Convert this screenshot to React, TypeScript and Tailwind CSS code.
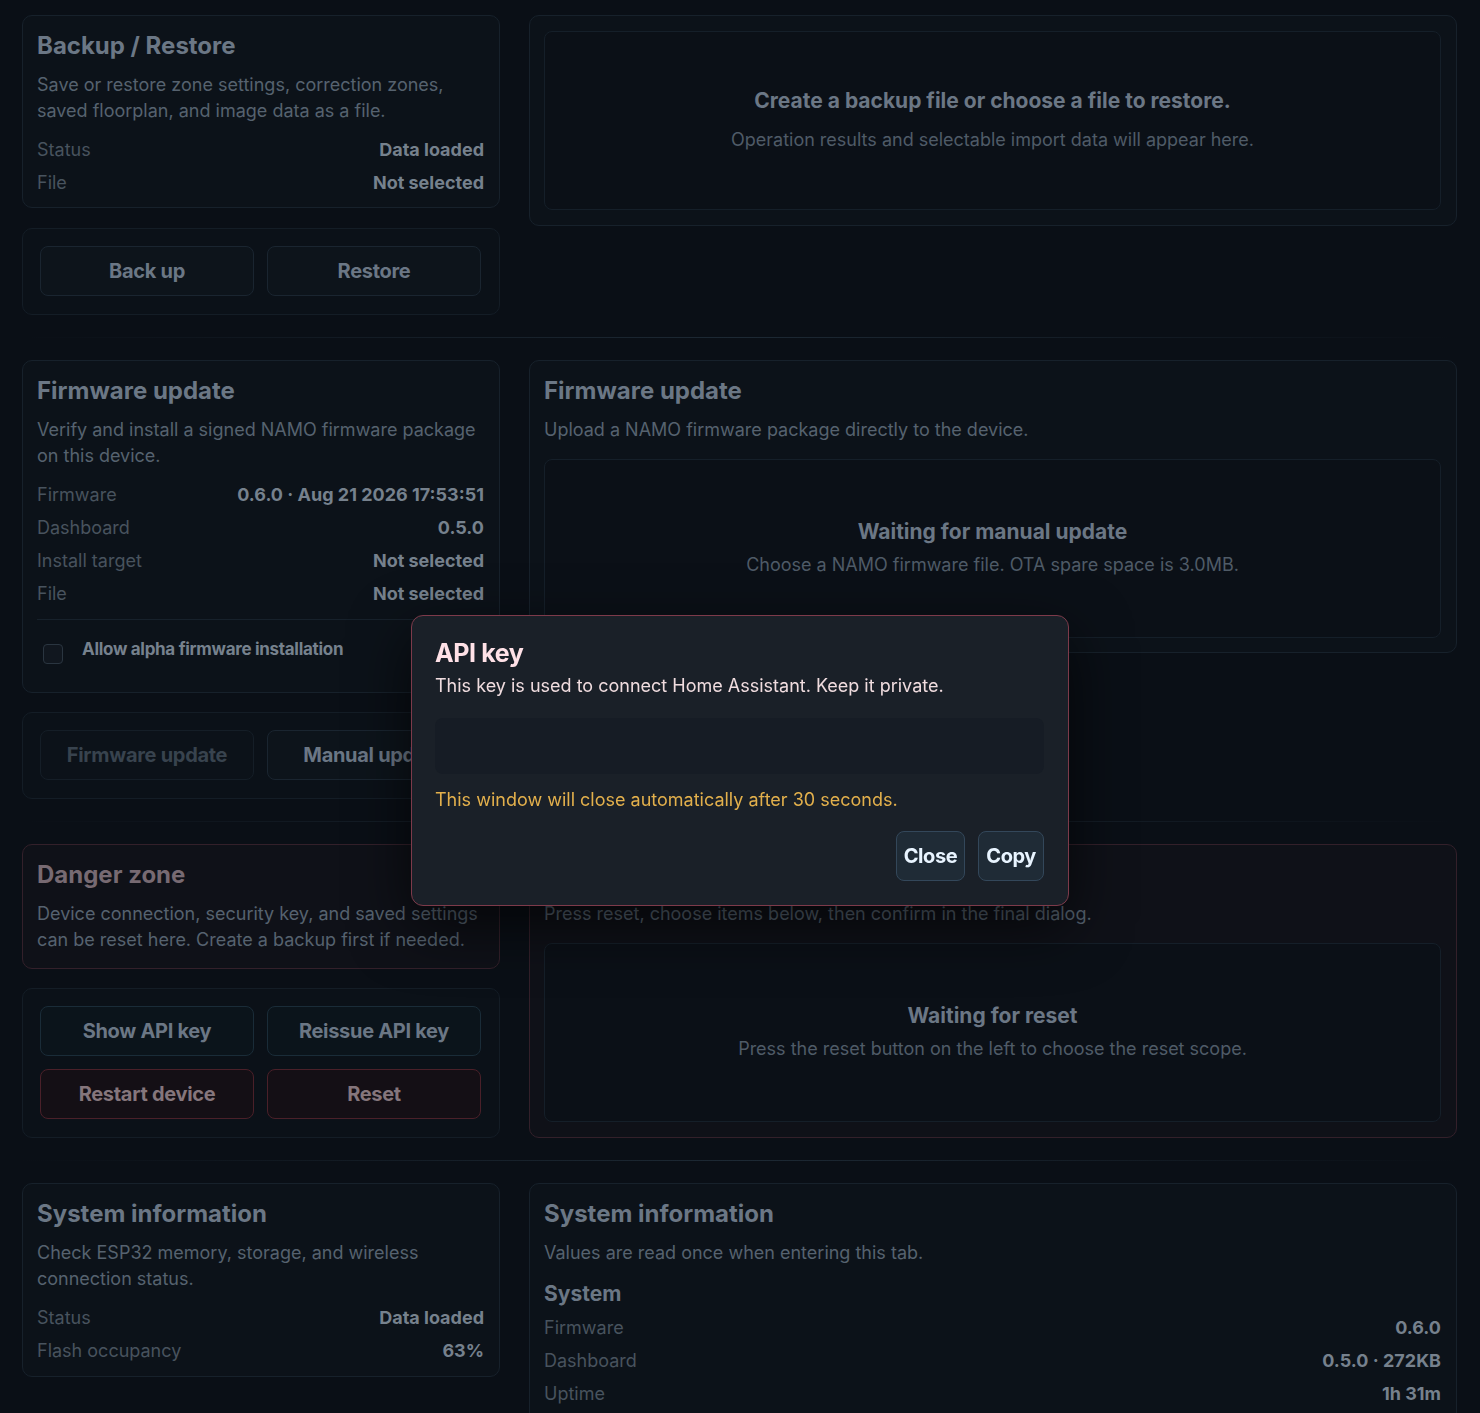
import React from 'react'

type Row = { label: string; value: string }

const cardBase = 'rounded-[10px] border pl-[14px] pr-[15px] pt-[15px]'
const plainCard = cardBase + ' border-[#17212b] bg-[#0c1219]'
const dangerCard = cardBase + ' border-[#33202a] bg-[#0f1118]'

const Title = ({ children, danger = false }: { children: React.ReactNode; danger?: boolean }) => (
  <h2 className={'text-[24px] leading-[30px] font-bold ' + (danger ? 'text-[#776a72]' : 'text-[#6b7785]')}>
    {children}
  </h2>
)

const Desc = ({ children }: { children: React.ReactNode }) => (
  <p className="mt-[11px] text-[18px] leading-[26px] text-[#56626f]">{children}</p>
)

const Rows = ({ rows, className = 'mt-[13px]' }: { rows: Row[]; className?: string }) => (
  <div className={'flex flex-col gap-[7px] ' + className}>
    {rows.map((r) => (
      <div key={r.label} className="flex justify-between text-[18px] leading-[26px]">
        <span className="text-[#48535e]">{r.label}</span>
        <span className="font-bold text-[#76818d]">{r.value}</span>
      </div>
    ))}
  </div>
)

const Btn = ({ children, tone = 'plain' }: { children: React.ReactNode; tone?: 'plain' | 'blue' | 'red' | 'off' }) => {
  const styles = {
    plain: 'border-[#1a2530] bg-[#0d141b] text-[#6b7785]',
    blue: 'border-[#1a2c38] bg-[#0b141b] text-[#6b7785]',
    red: 'border-[#4a2029] bg-[#140f15] text-[#85767c]',
    off: 'border-[#151e27] bg-[#0c1219] text-[#38434e]',
  }
  return (
    <button className={'h-[50px] rounded-[8px] border text-[20px] font-bold tracking-[-0.3px] ' + styles[tone]}>
      {children}
    </button>
  )
}

const ButtonCard = ({ children }: { children: React.ReactNode }) => (
  <div className="rounded-[10px] border border-[#141d26] bg-[#0b1118] pt-[17px] pr-[18px] pb-[18px] pl-[17px]">
    <div className="grid grid-cols-2 gap-[13px]">{children}</div>
  </div>
)

const Waiting = ({ title, sub, gap }: { title: string; sub: string; gap: string }) => (
  <div className={'flex h-[179px] flex-col items-center justify-center rounded-[8px] border border-[#151f29] bg-[#0b1017] ' + gap}>
    <p className="text-[21px] leading-[24px] font-bold text-[#6b7785]">{title}</p>
    <p className="text-[18px] leading-[26px] text-[#4f5b67]">{sub}</p>
  </div>
)

const Divider = () => <div className="my-[22px] h-px bg-linear-to-r from-transparent via-[#1d2934] to-transparent" />

export default function App() {
  return (
    <div className="min-h-screen bg-[#0a0f16] pt-[15px] pr-[23px] pl-[22px] font-['Inter',sans-serif]">
      {/* backup / restore */}
      <section className="grid grid-cols-[478px_928px] items-start gap-x-[29px]">
        <div className="flex flex-col gap-[20px]">
          <div className={plainCard + ' pb-[11px]'}>
            <Title>Backup / Restore</Title>
            <Desc>Save or restore zone settings, correction zones, saved floorplan, and image data as a file.</Desc>
            <Rows rows={[{ label: 'Status', value: 'Data loaded' }, { label: 'File', value: 'Not selected' }]} />
          </div>
          <ButtonCard>
            <Btn>Back up</Btn>
            <Btn>Restore</Btn>
          </ButtonCard>
        </div>
        <div className="rounded-[10px] border border-[#17212b] bg-[#0c1219] pt-[15px] pr-[15px] pb-[15px] pl-[14px]">
          <Waiting
            gap="gap-[14px]"
            title="Create a backup file or choose a file to restore."
            sub="Operation results and selectable import data will appear here."
          />
        </div>
      </section>

      <Divider />

      {/* firmware */}
      <section className="grid grid-cols-[478px_928px] items-start gap-x-[29px]">
        <div className="flex flex-col gap-[19px]">
          <div className={plainCard + ' pb-[28px]'}>
            <Title>Firmware update</Title>
            <Desc>Verify and install a signed NAMO firmware package on this device.</Desc>
            <Rows
              rows={[
                { label: 'Firmware', value: '0.6.0 · Aug 21 2026 17:53:51' },
                { label: 'Dashboard', value: '0.5.0' },
                { label: 'Install target', value: 'Not selected' },
                { label: 'File', value: 'Not selected' },
              ]}
            />
            <div className="mt-[12px] flex items-start gap-[19px] border-t border-[#17212b] pt-[18px] pl-[6px]">
              <span className="mt-[6px] h-[20px] w-[20px] shrink-0 rounded-[4px] border border-[#2a3540] bg-[#11171f]" />
              <span className="text-[17px] leading-[22px] font-bold tracking-[-0.3px] text-[#76818d]">
                Allow alpha firmware installation
              </span>
            </div>
          </div>
          <ButtonCard>
            <Btn tone="off">Firmware update</Btn>
            <Btn>Manual update</Btn>
          </ButtonCard>
        </div>
        <div className={plainCard + ' pb-[14px]'}>
          <Title>Firmware update</Title>
          <Desc>Upload a NAMO firmware package directly to the device.</Desc>
          <div className="mt-[16px]">
            <Waiting
              gap="gap-[8px]"
              title="Waiting for manual update"
              sub="Choose a NAMO firmware file. OTA spare space is 3.0MB."
            />
          </div>
        </div>
      </section>

      <Divider />

      {/* danger zone */}
      <section className="grid grid-cols-[478px_928px] items-start gap-x-[29px]">
        <div className="flex flex-col gap-[19px]">
          <div className={dangerCard + ' pb-[15px]'}>
            <Title danger>Danger zone</Title>
            <Desc>Device connection, security key, and saved settings can be reset here. Create a backup first if needed.</Desc>
          </div>
          <ButtonCard>
            <Btn tone="blue">Show API key</Btn>
            <Btn tone="blue">Reissue API key</Btn>
            <Btn tone="red">Restart device</Btn>
            <Btn tone="red">Reset</Btn>
          </ButtonCard>
        </div>
        <div className={dangerCard + ' pb-[15px]'}>
          <Title danger>Reset</Title>
          <Desc>Press reset, choose items below, then confirm in the final dialog.</Desc>
          <div className="mt-[16px]">
            <Waiting
              gap="gap-[8px]"
              title="Waiting for reset"
              sub="Press the reset button on the left to choose the reset scope."
            />
          </div>
        </div>
      </section>

      <Divider />

      {/* system information */}
      <section className="grid grid-cols-[478px_928px] items-start gap-x-[29px] pb-[40px]">
        <div className={plainCard + ' pb-[12px]'}>
          <Title>System information</Title>
          <Desc>Check ESP32 memory, storage, and wireless connection status.</Desc>
          <Rows rows={[{ label: 'Status', value: 'Data loaded' }, { label: 'Flash occupancy', value: '63%' }]} />
        </div>
        <div className={plainCard + ' pb-[15px]'}>
          <Title>System information</Title>
          <Desc>Values are read once when entering this tab.</Desc>
          <h3 className="mt-[15px] text-[21px] leading-[26px] font-bold text-[#6b7785]">System</h3>
          <Rows
            className="mt-[8px]"
            rows={[
              { label: 'Firmware', value: '0.6.0' },
              { label: 'Dashboard', value: '0.5.0 · 272KB' },
              { label: 'Uptime', value: '1h 31m' },
            ]}
          />
        </div>
      </section>

      {/* api key dialog */}
      <div className="fixed inset-0 flex justify-center pt-[615px]">
        <div className="h-fit w-[658px] rounded-[12px] border border-[#7d3a4a] bg-[#1a2028] pt-[22px] pr-[24px] pb-[24px] pl-[23px] shadow-[0_20px_60px_rgba(0,0,0,0.65)]">
          <h2 className="text-[25px] leading-[30px] font-bold tracking-[-0.4px] text-[#ffe1e7]">API key</h2>
          <p className="mt-[5px] text-[18px] leading-[26px] text-[#f0dcdf]">
            This key is used to connect Home Assistant. Keep it private.
          </p>
          <div className="mt-[19px] h-[56px] rounded-[8px] bg-[#161c25]" />
          <p className="mt-[13px] text-[18px] leading-[26px] text-[#e3b04c]">
            This window will close automatically after 30 seconds.
          </p>
          <div className="mt-[18px] flex justify-end gap-[13px]">
            <button className="h-[50px] rounded-[8px] border border-[#33475a] bg-[#1f2b36] px-[7px] text-[20px] font-bold tracking-[-0.4px] text-[#e8f4ff]">
              Close
            </button>
            <button className="h-[50px] rounded-[8px] border border-[#33475a] bg-[#1f2b36] px-[7px] text-[20px] font-bold tracking-[-0.4px] text-[#e8f4ff]">
              Copy
            </button>
          </div>
        </div>
      </div>
    </div>
  )
}
